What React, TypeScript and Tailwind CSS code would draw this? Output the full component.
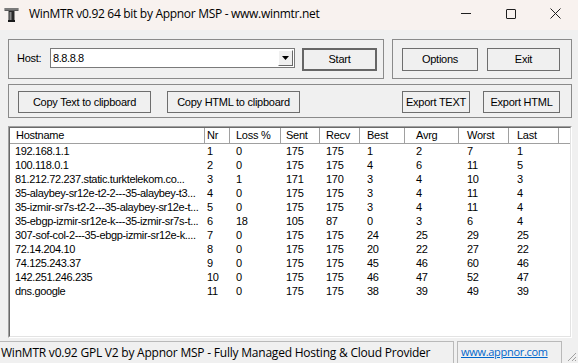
import React from "react";

const cols = [
  { w: "w-[195px]", hp: "pl-[6px]", dp: "pl-[5px]" },
  { w: "w-[25px]", hp: "pl-[2px]", dp: "pl-[2px]" },
  { w: "w-[51px]", hp: "pl-[6px]", dp: "pl-[6px]" },
  { w: "w-[39px]", hp: "pl-[5px]", dp: "pl-[5px]" },
  { w: "w-[40px]", hp: "pl-[6px]", dp: "pl-[6px]" },
  { w: "w-[45px]", hp: "pl-[7px]", dp: "pl-[7px]" },
  { w: "w-[54px]", hp: "pl-[11px]", dp: "pl-[11px]" },
  { w: "w-[50px]", hp: "pl-[8px]", dp: "pl-[8px]" },
  { w: "w-[50px]", hp: "pl-[8px]", dp: "pl-[8px]" },
];

const headers = ["Hostname", "Nr", "Loss %", "Sent", "Recv", "Best", "Avrg", "Worst", "Last"];

const rows: string[][] = [
  ["192.168.1.1", "1", "0", "175", "175", "1", "2", "7", "1"],
  ["100.118.0.1", "2", "0", "175", "175", "4", "6", "11", "5"],
  ["81.212.72.237.static.turktelekom.co...", "3", "1", "171", "170", "3", "4", "10", "3"],
  ["35-alaybey-sr12e-t2-2---35-alaybey-t3...", "4", "0", "175", "175", "3", "4", "11", "4"],
  ["35-izmir-sr7s-t2-2---35-alaybey-sr12e-t...", "5", "0", "175", "175", "3", "4", "11", "4"],
  ["35-ebgp-izmir-sr12e-k---35-izmir-sr7s-t...", "6", "18", "105", "87", "0", "3", "6", "4"],
  ["307-sof-col-2---35-ebgp-izmir-sr12e-k....", "7", "0", "175", "175", "24", "25", "29", "25"],
  ["72.14.204.10", "8", "0", "175", "175", "20", "22", "27", "22"],
  ["74.125.243.37", "9", "0", "175", "175", "45", "46", "60", "46"],
  ["142.251.246.235", "10", "0", "175", "175", "46", "47", "52", "47"],
  ["dns.google", "11", "0", "175", "175", "38", "39", "49", "39"],
];

function Btn({ label, cls, def }: { label: string; cls: string; def?: boolean }) {
  return (
    <div
      className={
        "flex items-center justify-center bg-[#f0f0f0] text-black " +
        (def ? "border-2 border-[#666666] " : "border border-[#6e6e6e] ") +
        cls
      }
    >
      {label}
    </div>
  );
}

function AppIcon() {
  return (
    <svg width="16" height="16" viewBox="0 0 16 16">
      <rect x="0.5" y="1" width="14" height="3" fill="#5a5a5a" />
      <rect x="1" y="1.5" width="13" height="1" fill="#9a9a9a" />
      <rect x="4.5" y="4" width="6" height="10" fill="#2a2a2a" />
      <rect x="5.5" y="5" width="2" height="8" fill="#8a8a8a" />
      <rect x="4" y="13" width="7" height="2" fill="#1a1a1a" />
    </svg>
  );
}

export default function App() {
  return (
    <div className="w-[578px] h-[363px] bg-[#f0f0f0] overflow-hidden flex flex-col font-['Liberation_Sans',Arial,sans-serif] text-[11px] tracking-[-0.25px] text-black">
      {/* Title bar */}
      <div className="h-[30px] shrink-0 bg-[#f8f2ef] flex items-center font-['Open_Sans',sans-serif] text-[12px] tracking-[-0.3px]">
        <div className="pl-[4px] w-[29px] flex items-center">
          <AppIcon />
        </div>
        <div className="flex-1 pb-[3px]">WinMTR v0.92 64 bit by Appnor MSP - www.winmtr.net</div>
        <div className="flex items-center h-full pb-[3px]">
          <div className="w-[45px] flex justify-center">
            <div className="w-[10px] h-px bg-[#1f1f1f]" />
          </div>
          <div className="w-[45px] flex justify-center">
            <div className="w-[10px] h-[10px] border border-[#1f1f1f] rounded-[1px]" />
          </div>
          <div className="w-[45px] flex justify-center">
            <svg width="11" height="11" viewBox="0 0 11 11">
              <path d="M0.5 0.5 L10.5 10.5 M10.5 0.5 L0.5 10.5" stroke="#1f1f1f" strokeWidth="1" />
            </svg>
          </div>
        </div>
      </div>

      {/* Content */}
      <div className="pl-[8px] pt-[9px] flex flex-col">
        <div className="flex gap-[8px]">
          <div className="w-[376px] h-[40px] border border-[#8a8a8a] pt-[8px] pl-[8px] flex items-start">
            <div className="w-[33px] h-[20px] flex items-center">Host:</div>
            <div className="w-[245px] h-[20px] border border-[#7a7a7a] bg-white flex items-center">
              <div className="flex-1 pl-[2px] tracking-[-0.4px]">8.8.8.8</div>
              <div className="w-[15px] h-[16px] mr-[1px] bg-[#f0f0f0] border border-t-white border-l-white border-b-[#696969] border-r-[#696969] flex items-center justify-center">
                <svg width="7" height="4" viewBox="0 0 7 4">
                  <path d="M0 0 H7 L3.5 4 Z" fill="#000" />
                </svg>
              </div>
            </div>
            <Btn label="Start" cls="ml-[7px] w-[75px] h-[23px]" def />
          </div>
          <div className="w-[180px] h-[40px] border border-[#8a8a8a] pt-[8px] pl-[9px] flex items-start gap-[9px]">
            <Btn label="Options" cls="w-[76px] h-[23px]" />
            <Btn label="Exit" cls="w-[73px] h-[23px]" />
          </div>
        </div>

        <div className="mt-[5px] w-[564px] h-[34px] border border-[#8a8a8a] pt-[6px] pl-[9px] pr-[11px] flex items-start">
          <Btn label="Copy Text to clipboard" cls="w-[133px] h-[22px]" />
          <Btn label="Copy HTML to clipboard" cls="ml-[16px] w-[133px] h-[22px]" />
          <Btn label="Export TEXT" cls="ml-auto w-[68px] h-[22px]" />
          <Btn label="Export HTML" cls="ml-[13px] w-[77px] h-[22px]" />
        </div>

        {/* List view */}
        <div className="mt-[8px] w-[564px] h-[212px] border border-t-[#a0a0a0] border-l-[#a0a0a0] border-b-white border-r-white">
          <div className="w-full h-full border border-t-[#696969] border-l-[#696969] border-b-[#e3e3e3] border-r-[#e3e3e3] bg-white flex flex-col">
            <div className="flex h-[16px] shrink-0">
              {headers.map((h, i) => (
                <div
                  key={h}
                  className={cols[i].w + " " + cols[i].hp + " h-[16px] border-r border-b border-[#a0a0a0] flex items-center whitespace-nowrap overflow-hidden"}
                >
                  {h}
                </div>
              ))}
              <div className="flex-1 h-[16px] border-b border-[#a0a0a0]" />
            </div>
            {rows.map((r, ri) => (
              <div key={ri} className="flex h-[14px] leading-[14px]">
                {r.map((c, ci) => (
                  <div
                    key={ci}
                    className={cols[ci].w + " " + cols[ci].dp + " whitespace-nowrap overflow-hidden" + (ci === 0 ? " tracking-[-0.35px]" : "")}
                  >
                    {c}
                  </div>
                ))}
              </div>
            ))}
          </div>
        </div>
      </div>

      {/* Status bar */}
      <div className="mt-[3px] flex h-[22px] font-['Open_Sans',sans-serif] text-[12px] tracking-[-0.22px]">
        <div className="w-[454px] h-[22px] border-t border-r border-[#b9b9b9] flex items-center pl-[1px] whitespace-nowrap overflow-hidden">
          WinMTR v0.92 GPL V2 by Appnor MSP - Fully Managed Hosting &amp; Cloud Provider
        </div>
        <div className="ml-[3px] w-[105px] h-[22px] border-t border-l border-r border-[#b9b9b9] flex items-center pl-[3px] whitespace-nowrap overflow-hidden">
          <span className="text-[#0066cc] underline text-[11px] tracking-[-0.3px]">www.appnor.com</span>
        </div>
        <div className="flex-1 flex items-end justify-end pr-[1px] pb-[1px]">
          <svg width="12" height="12" viewBox="0 0 12 12">
            <path d="M11 3 L3 11 M11 7 L7 11 M11 10 L10 11" stroke="#a0a0a0" strokeWidth="1" />
          </svg>
        </div>
      </div>
    </div>
  );
}
